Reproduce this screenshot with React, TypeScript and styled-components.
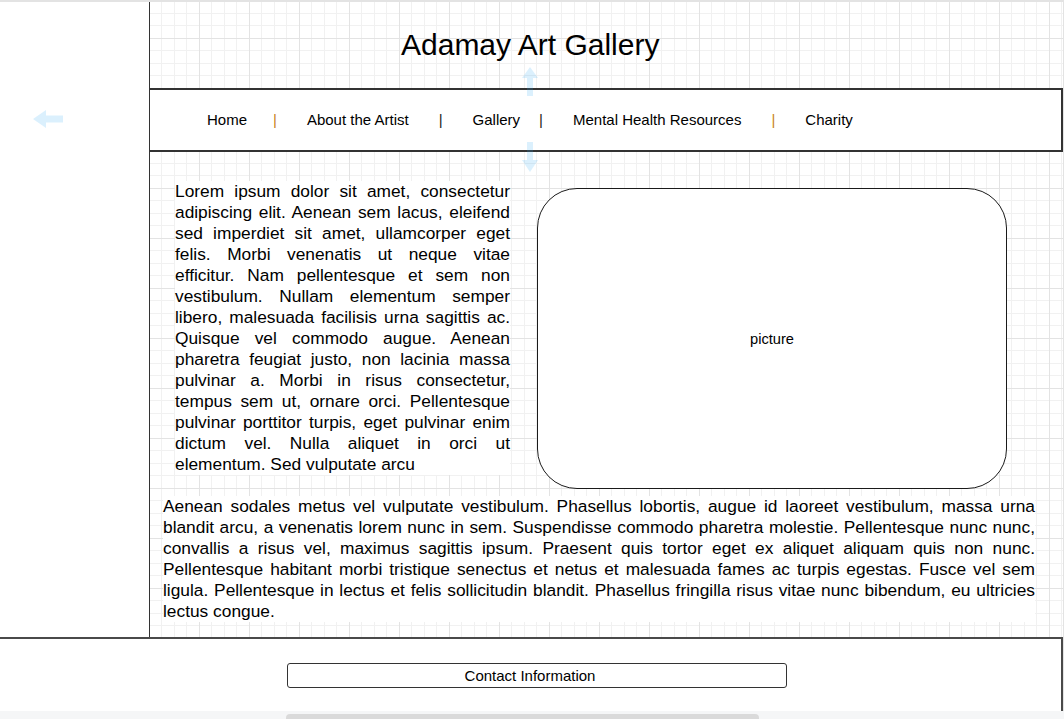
import React from 'react';
import styled, { createGlobalStyle } from 'styled-components';

const GlobalStyle = createGlobalStyle`
  html, body {
    margin: 0;
    padding: 0;
  }
  body {
    font-family: "Liberation Sans", Arial, sans-serif;
    background: #e3e3e3;
    overflow: hidden;
    color: #000;
  }
`;

const Page = styled.div`
  position: relative;
  width: 1064px;
  height: 719px;
  box-sizing: border-box;
  padding-top: 2px;
  display: flex;
  flex-direction: column;
  background: #e3e3e3;
`;

const Canvas = styled.div`
  width: 1063px;
  display: flex;
  flex-direction: column;
  background: #fff;
`;

const Upper = styled.div`
  display: flex;
  height: 635px;
`;

const Sidebar = styled.aside`
  flex: none;
  width: 149px;
  background: #fff;
  border-right: 1px solid #333;
`;

const Main = styled.main`
  flex: 1;
  display: flex;
  flex-direction: column;
  background-color: #fff;
  background-image:
    linear-gradient(to right, #e3e3e3 1px, transparent 1px),
    linear-gradient(to bottom, #e3e3e3 1px, transparent 1px),
    linear-gradient(
      to right,
      #f1f1f1 0 1px,
      transparent 1px 12px,
      #f1f1f1 12px 13px,
      transparent 13px 25px,
      #f1f1f1 25px 26px,
      transparent 26px 37px,
      #f1f1f1 37px 38px,
      transparent 38px
    ),
    linear-gradient(
      to bottom,
      #f1f1f1 0 1px,
      transparent 1px 12px,
      #f1f1f1 12px 13px,
      transparent 13px 25px,
      #f1f1f1 25px 26px,
      transparent 26px 37px,
      #f1f1f1 37px 38px,
      transparent 38px
    );
  background-size: 50px 50px;
  background-position: 49px 36px;
`;

const Header = styled.header`
  height: 86px;
  box-sizing: border-box;
  display: flex;
  align-items: center;
  padding-left: 251px;
`;

const Title = styled.h1`
  margin: 0;
  font-size: 30px;
  font-weight: 400;
  line-height: 1.15;
  color: #000;
`;

const NavBar = styled.nav`
  height: 64px;
  box-sizing: border-box;
  display: flex;
  align-items: center;
  gap: 30px;
  padding: 0 0 2px 57px;
  background: #fff;
  border-top: 2px solid #333;
  border-bottom: 2px solid #333;
  border-right: 2px solid #333;
`;

const NavLink = styled.a`
  font-size: 15px;
  color: #000;
  text-decoration: none;
  white-space: nowrap;
`;

const Separator = styled.span<{ $tone: 'accent' | 'plain'; $pull?: number }>`
  font-size: 15px;
  color: ${(p) => (p.$tone === 'accent' ? '#c8821a' : '#222')};
  margin-left: ${(p) => (p.$pull ? -p.$pull : 0)}px;
`;

const Content = styled.section`
  display: flex;
  flex-direction: column;
`;

const TopRow = styled.div`
  display: flex;
  align-items: flex-start;
  padding: 29px 0 0 25px;
`;

const Intro = styled.p`
  margin: 0;
  width: 335px;
  font-size: 17.33px;
  line-height: 21px;
  text-align: justify;
  background: #fff;
`;

const Picture = styled.div`
  margin: 7px 0 0 27px;
  width: 470px;
  height: 301px;
  box-sizing: border-box;
  border: 1px solid #1a1a1a;
  border-radius: 40px;
  background: #fff;
  display: flex;
  align-items: center;
  justify-content: center;
  font-size: 14.67px;
`;

const Body = styled.p`
  margin: 7px 0 0 13px;
  width: 872px;
  font-size: 17.33px;
  line-height: 21px;
  text-align: justify;
  background: #fff;
`;

const Footer = styled.footer`
  height: 74px;
  box-sizing: border-box;
  padding: 24px 0 0 287px;
  background: #fff;
  border-top: 2px solid #4a4a4a;
  border-right: 2px solid #4a4a4a;
`;

const ContactButton = styled.button`
  display: block;
  width: 500px;
  height: 25px;
  box-sizing: border-box;
  padding: 0 14px 0 0;
  border: 1px solid #333;
  border-radius: 3px;
  background: #fff;
  color: #000;
  font: 15px "Liberation Sans", Arial, sans-serif;
`;

const ScrollTrack = styled.div`
  height: 8px;
  box-sizing: border-box;
  padding: 3px 0 0 286px;
  background: #f5f6f7;
`;

const ScrollThumb = styled.div`
  width: 473px;
  height: 5px;
  background: #dadada;
  border-radius: 4px 4px 0 0;
`;

const HoverArrow = styled.svg<{ $x: number; $y: number }>`
  position: absolute;
  left: ${(p) => p.$x}px;
  top: ${(p) => p.$y}px;
  pointer-events: none;
`;

const ARROW_FILL = '#29a8f5';
const ARROW_OPACITY = 0.17;

const navItems: Array<
  | { kind: 'link'; label: string }
  | { kind: 'sep'; tone: 'accent' | 'plain'; pull?: number }
> = [
  { kind: 'link', label: 'Home' },
  { kind: 'sep', tone: 'accent', pull: 4 },
  { kind: 'link', label: 'About the Artist' },
  { kind: 'sep', tone: 'plain' },
  { kind: 'link', label: 'Gallery' },
  { kind: 'sep', tone: 'plain', pull: 11 },
  { kind: 'link', label: 'Mental Health Resources' },
  { kind: 'sep', tone: 'accent' },
  { kind: 'link', label: 'Charity' },
];

export default function App() {
  return (
    <>
      <GlobalStyle />
      <Page>
        <Canvas>
          <Upper>
            <Sidebar />
            <Main>
              <Header>
                <Title>Adamay Art Gallery</Title>
              </Header>
              <NavBar>
                {navItems.map((item, i) =>
                  item.kind === 'link' ? (
                    <NavLink key={i} href="#">
                      {item.label}
                    </NavLink>
                  ) : (
                    <Separator key={i} $tone={item.tone} $pull={item.pull}>
                      |
                    </Separator>
                  )
                )}
              </NavBar>
              <Content>
                <TopRow>
                  <Intro>
                    Lorem ipsum dolor sit amet, consectetur adipiscing elit. Aenean sem lacus, eleifend sed
                    imperdiet sit amet, ullamcorper eget felis. Morbi venenatis ut neque vitae efficitur. Nam
                    pellentesque et sem non vestibulum. Nullam elementum semper libero, malesuada facilisis urna
                    sagittis ac. Quisque vel commodo augue. Aenean pharetra feugiat justo, non lacinia massa
                    pulvinar a. Morbi in risus consectetur, tempus sem ut, ornare orci. Pellentesque pulvinar
                    porttitor turpis, eget pulvinar enim dictum vel. Nulla aliquet in orci ut elementum. Sed
                    vulputate arcu
                  </Intro>
                  <Picture>picture</Picture>
                </TopRow>
                <Body>
                  Aenean sodales metus vel vulputate vestibulum. Phasellus lobortis, augue id laoreet vestibulum,
                  massa urna blandit arcu, a venenatis lorem nunc in sem. Suspendisse commodo pharetra molestie.
                  Pellentesque nunc nunc, convallis a risus vel, maximus sagittis ipsum. Praesent quis tortor eget
                  ex aliquet aliquam quis non nunc. Pellentesque habitant morbi tristique senectus et netus et
                  malesuada fames ac turpis egestas. Fusce vel sem ligula. Pellentesque in lectus et felis
                  sollicitudin blandit. Phasellus fringilla risus vitae nunc bibendum, eu ultricies lectus congue.
                </Body>
              </Content>
            </Main>
          </Upper>
          <Footer>
            <ContactButton type="button">Contact Information</ContactButton>
          </Footer>
        </Canvas>
        <ScrollTrack>
          <ScrollThumb />
        </ScrollTrack>

        <HoverArrow $x={33} $y={110} width="30" height="18" viewBox="0 0 30 18">
          <path
            d="M0 9 L13 0 L13 5.5 L30 5.5 L30 12.5 L13 12.5 L13 18 Z"
            fill={ARROW_FILL}
            fillOpacity={ARROW_OPACITY}
          />
        </HoverArrow>
        <HoverArrow $x={522} $y={67} width="16" height="29" viewBox="0 0 16 29">
          <path
            d="M8 0 L16 11 L11 11 L11 29 L5 29 L5 11 L0 11 Z"
            fill={ARROW_FILL}
            fillOpacity={ARROW_OPACITY}
          />
        </HoverArrow>
        <HoverArrow $x={522} $y={142} width="16" height="30" viewBox="0 0 16 30">
          <path
            d="M5 0 L11 0 L11 18 L16 18 L8 30 L0 18 L5 18 Z"
            fill={ARROW_FILL}
            fillOpacity={ARROW_OPACITY}
          />
        </HoverArrow>
      </Page>
    </>
  );
}
